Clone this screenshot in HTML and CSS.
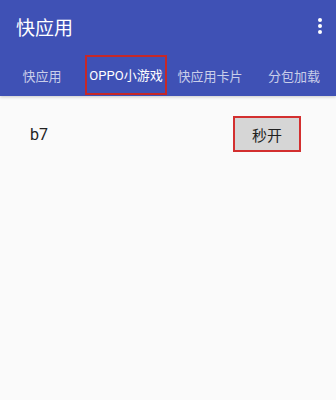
FILE: index.html
```html
<!DOCTYPE html>
<html lang="zh">
<head>
  <meta charset="UTF-8" />
  <title>快应用</title>
  <link rel="stylesheet" href="styles.css">
</head>
<body>
  <div class="appbar">
    <div class="toolbar">
      <span class="title">快应用</span>
      <span class="menu"><i></i><i></i><i></i></span>
    </div>
    <div class="tabs">
      <div class="tab">快应用</div>
      <div class="tab active"><span class="mark">OPPO小游戏</span></div>
      <div class="tab">快应用卡片</div>
      <div class="tab">分包加载</div>
    </div>
  </div>

  <div class="row">
    <span class="name">b7</span>
    <button class="open-btn">秒开</button>
  </div>
</body>
</html>
```

FILE: styles.css
```css
body {
  margin: 0;
  width: 336px;
  height: 400px;
  background: #fafafa;
  font-family: Roboto, "Noto Sans CJK SC", sans-serif;
  overflow: hidden;
}
.appbar {
  background: #3f51b5;
  color: white;
  box-shadow: 0 1px 3px rgba(0, 0, 0, 0.2);
}
.toolbar {
  height: 55px;
  display: flex;
  align-items: center;
  justify-content: space-between;
  padding: 0 16px;
}
.title {
  font-size: 19px;
  margin-top: -2px;
}
.menu {
  display: flex;
  flex-direction: column;
  gap: 2px;
  margin-right: -2px;
  margin-top: -3px;
}
.menu i {
  width: 4px;
  height: 4px;
  border-radius: 50%;
  background: white;
}
.tabs {
  display: flex;
  height: 41px;
}
.tab {
  flex: 1;
  display: flex;
  align-items: center;
  justify-content: center;
  font-size: 13px;
  color: rgba(255, 255, 255, 0.72);
}
.tab.active {
  color: white;
}
.mark {
  width: 78px;
  height: 36px;
  border: 2px solid #c62828;
  display: flex;
  align-items: center;
  justify-content: center;
  margin-top: -2px;
}
.row {
  display: flex;
  align-items: center;
  justify-content: space-between;
  padding: 20px 35px 0 30px;
}
.name {
  font-size: 16px;
  color: #222;
}
.open-btn {
  width: 68px;
  height: 36px;
  background: #d6d6d6;
  border: 2px solid #d32f2f;
  font-family: inherit;
  font-size: 15px;
  color: #222;
  padding: 0;
}
```
